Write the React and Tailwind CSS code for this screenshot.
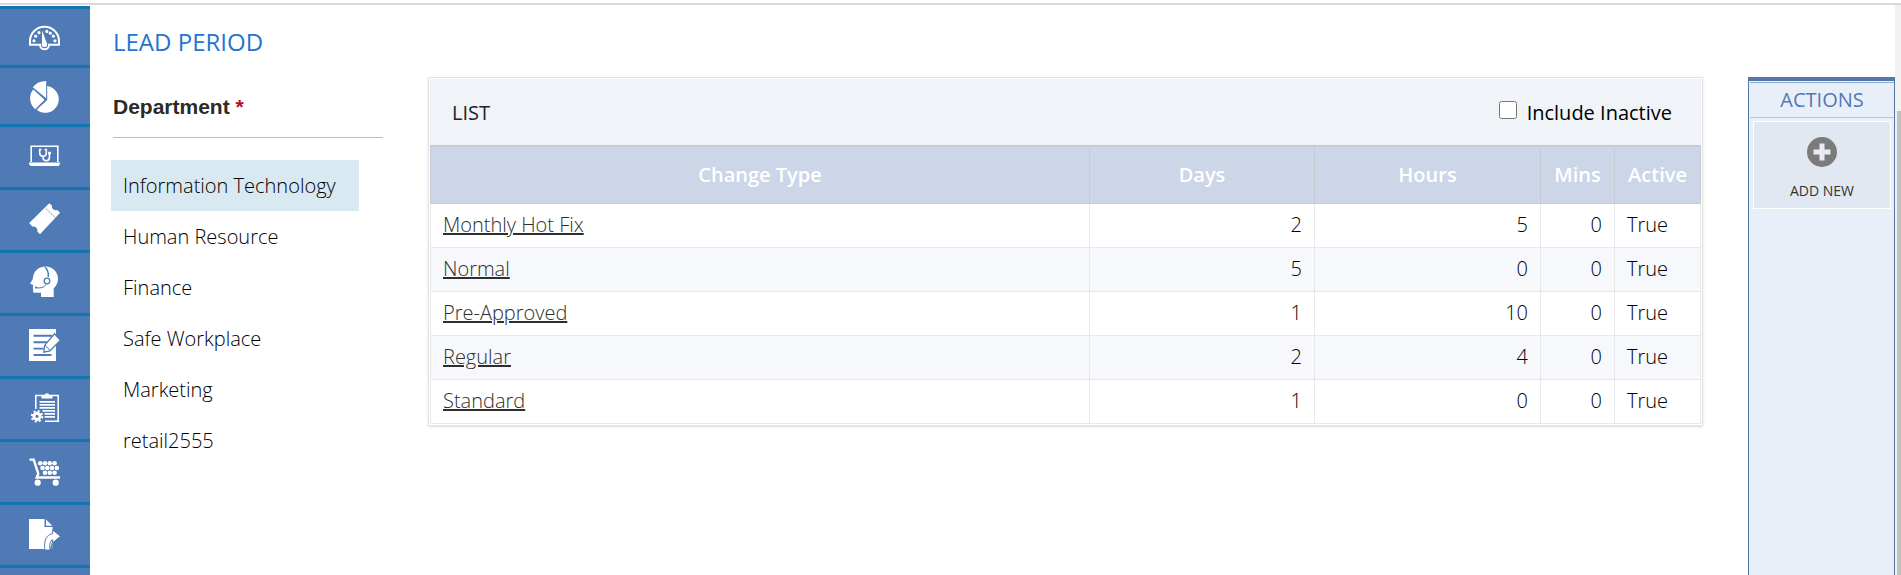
import React, { useState } from 'react';

const GaugeIcon = () => (
    <>
        <path d="M1 23.8V20a14.5 14.2 0 0 1 29 0v3.8h-10a4.5 4.5 0 0 1-9 0Z" fill="none" stroke="currentColor" strokeWidth="2" />
        {[[5, 19.8], [6.7, 15.2], [10, 11.7], [17.8, 10.4], [21.3, 12.2], [24.4, 15.2], [26, 19.8]].map(([x, y]) => (
            <circle key={x} cx={x} cy={y} r="1.6" />
        ))}
        <path d="M13 9.5l5 13a2.5 2.5 0 0 1-5 .6Z" />
        <circle cx="15.4" cy="23.5" r="2.6" />
    </>
);

const PieIcon = () => (
    <>
        <path d="M18.2 6a13.5 13.5 0 1 1-10.5 23.8l10.5-9.8Z" />
        <path d="M4.2 9.6l11.4 10.2-9.4 9.4a14 14 0 0 1-2-19.6Z" />
        <path d="M17.2 1v17.2L3.8 7.2A17 17 0 0 1 17.2 1Z" />
    </>
);

const LaptopIcon = () => (
    <>
        <path d="M2.2 21V5.2h26.6V21" fill="none" stroke="currentColor" strokeWidth="1.6" />
        <path d="M0 21.5h31v1.5l-1.5 2h-28L0 23Z" />
        <path d="M12.5 8.5h-1.8v3.5a3.3 3.3 0 0 0 6.6 0V8.5h-1.8M14 15.3v1.2a3.2 3.2 0 0 0 6.4 0v-4" fill="none" stroke="currentColor" strokeWidth="1.6" />
        <circle cx="20.6" cy="12" r="1.6" />
    </>
);

const TicketIcon = () => (
    <>
        <path d="M20.3-.8l2.6 2.3c-.6 2.6 1.5 4.8 4.2 4.7l1.2-.3 2.8 2.8L11 30.2l-2.7-2.7c.6-3-1.6-5.4-5-5L.2 19Z" />
        <path d="M16.8 4.5l10.4 10" stroke="#4f7ab5" strokeWidth="1" strokeDasharray="1.4 1" />
    </>
);

const HeadsetIcon = () => (
    <>
        <path d="M4 10C5 3 10.5-.6 16.5-.6 24-.6 29 5 29 12c0 3.5-1.5 6.5-4.3 9.5V30H12v-4.2H6c-1.5 0-2-1-2-2.6v-5.4L1 16.8 3.8 12Z" />
        <g fill="none" stroke="#4f7ab5">
            <path d="M16 0c2.6 2.5 3.6 6 3.3 10" strokeWidth="1.5" />
            <circle cx="18" cy="14" r="2.8" strokeWidth="1.3" />
            <path d="M17 17.5c-1.5 3-6 4-10 3.2" strokeWidth="1" />
        </g>
        <circle cx="7" cy="20.6" r="1.1" fill="#4f7ab5" />
    </>
);

const EditIcon = () => (
    <>
        <path d="M0-1h27v32H0Z" />
        <path d="M4.5 5.8h18.5M4.5 12.2h14M4.5 18.6h10M4.5 25h18" stroke="#4f7ab5" strokeWidth="1.9" />
        <path d="M25.5 3.8l6 6.5L20.8 21l-6 1.2.8-6.8Z" stroke="#4f7ab5" strokeWidth="1.3" />
        <path d="M16.2 15.2l4.7 5" stroke="#4f7ab5" strokeWidth="1" />
    </>
);

const ClipboardIcon = () => (
    <>
        <path d="M6.8 16V2.5h22.4v25.8H16" fill="none" stroke="currentColor" strokeWidth="1.6" />
        <path d="M12.5 5.5V2.2h3a2.6 2.6 0 0 1 5 0h3v3.3Z" />
        <path d="M10.5 8.8h15.5M10.5 11.8h15.5M10.5 14.8h15.5M13.5 17.8h12.5M15.5 20.8h10.5M15.5 23.8h10.5" stroke="currentColor" strokeWidth="1.8" />
        <circle cx="8" cy="23.3" r="3.1" fill="none" stroke="currentColor" strokeWidth="3" />
        <circle cx="8" cy="23.3" r="5.2" fill="none" stroke="currentColor" strokeWidth="2.2" strokeDasharray="2 2.08" />
    </>
);

const CartIcon = () => (
    <>
        <path d="M.5 3.6h4.2l4.6 14.2-1.6 3.7h23.3" fill="none" stroke="currentColor" strokeWidth="2.4" />
        {[[11.2, 7.3], [16, 7.3], [20.8, 7.3], [25.6, 7.3], [13.5, 12], [18.3, 12], [23.1, 12], [27.9, 12], [16, 16.7], [20.8, 16.7], [25.6, 16.7]].map(([x, y]) => (
            <circle key={`${x}-${y}`} cx={x} cy={y} r="2.3" />
        ))}
        <circle cx="8.7" cy="26.7" r="3.1" />
        <circle cx="26.7" cy="26.7" r="3.1" />
    </>
);

const ShareIcon = () => (
    <>
        <path d="M0 0h15.5v8h8v22H0Z" />
        <path d="M17 .5l6.3 6.2H17Z" />
        <path d="M23.5 21v9.5H21Z" fill="#4f7ab5" />
        <path d="M15.8 30.5c-1-9 1.5-15 7.8-15.7v-3.8l7.9 6.3-7.9 6.5v-3.3c-2.5 1.5-3.4 5-2.6 10" stroke="#4f7ab5" strokeWidth="1" />
    </>
);

const navItems = [
    { label: 'Dashboard', icon: GaugeIcon, height: 'h-[59px]' },
    { label: 'Reports', icon: PieIcon, height: 'h-[59px]' },
    { label: 'Diagnostics', icon: LaptopIcon, height: 'h-[63px]' },
    { label: 'Tickets', icon: TicketIcon, height: 'h-[63px]' },
    { label: 'Support', icon: HeadsetIcon, height: 'h-[63px]' },
    { label: 'Forms', icon: EditIcon, height: 'h-[63px]' },
    { label: 'Tasks', icon: ClipboardIcon, height: 'h-[63px]' },
    { label: 'Purchases', icon: CartIcon, height: 'h-[63px]' },
    { label: 'Releases', icon: ShareIcon, height: 'h-[63px]' },
];

const departments = ['Information Technology', 'Human Resource', 'Finance', 'Safe Workplace', 'Marketing', 'retail2555'];

const changeTypes = [
    { name: 'Monthly Hot Fix', days: 2, hours: 5, mins: 0, active: 'True' },
    { name: 'Normal', days: 5, hours: 0, mins: 0, active: 'True' },
    { name: 'Pre-Approved', days: 1, hours: 10, mins: 0, active: 'True' },
    { name: 'Regular', days: 2, hours: 4, mins: 0, active: 'True' },
    { name: 'Standard', days: 1, hours: 0, mins: 0, active: 'True' },
];

const Sidebar = () => (
    <nav className="mt-px w-[90px] shrink-0 bg-[#4f7ab5]">
        {navItems.map(({ label, icon: Icon, height }) => (
            <a key={label} href="#" aria-label={label} className={`flex items-center justify-center border-t-3 border-[#1375b0] text-white ${height}`}>
                <svg viewBox="0 0 32 32" fill="currentColor" className="size-8 overflow-visible">
                    <Icon />
                </svg>
            </a>
        ))}
        <div className="border-t-3 border-[#1375b0]" />
    </nav>
);

const DepartmentList = ({ selected, onSelect }) => (
    <section className="w-[272px] shrink-0">
        <h2 className="ml-0.5 border-b border-[#bfbfbf] pt-[18px] pb-[18px] font-['Liberation_Sans',Arial,sans-serif] text-[21px] leading-6 font-bold text-[#2b2b2b]">
            Department <span className="text-[#b01116]">*</span>
        </h2>
        <ul className="mt-[22px] w-[248px]">
            {departments.map((name) => (
                <li key={name}>
                    <button
                        onClick={() => onSelect(name)}
                        className={`h-[51px] w-full px-3 text-left font-light text-black ${selected === name ? 'bg-[#d8e9f1]' : ''}`}
                    >
                        {name}
                    </button>
                </li>
            ))}
        </ul>
    </section>
);

const ChangeTypeTable = () => (
    <table className="w-full table-fixed border-collapse">
        <colgroup>
            <col />
            <col className="w-[225px]" />
            <col className="w-[226px]" />
            <col className="w-[74px]" />
            <col className="w-[86px]" />
        </colgroup>
        <thead>
            <tr className="h-[57px] bg-[#ccd6e8] text-white">
                {['Change Type', 'Days', 'Hours', 'Mins', 'Active'].map((title) => (
                    <th key={title} className="border border-t-2 border-[#c6cad1] font-semibold">{title}</th>
                ))}
            </tr>
        </thead>
        <tbody className="font-light text-black">
            {changeTypes.map((row) => (
                <tr key={row.name} className="h-11 even:bg-[#f6f8fc]">
                    <td className="border border-[#e6e8e9] px-3">
                        <a href="#" className="text-[#2e2e2e] underline">{row.name}</a>
                    </td>
                    <td className="border border-[#e6e8e9] px-3 text-right">{row.days}</td>
                    <td className="border border-[#e6e8e9] px-3 text-right">{row.hours}</td>
                    <td className="border border-[#e6e8e9] px-3 text-right">{row.mins}</td>
                    <td className="border border-[#e6e8e9] px-3">{row.active}</td>
                </tr>
            ))}
        </tbody>
    </table>
);

const ActionsPanel = () => (
    <aside className="mt-[72px] flex w-[147px] shrink-0 flex-col border border-t-4 border-b-0 border-[#5577a8] bg-[#e9eff8] pt-px pl-px">
        <h2 className="border-t border-b border-t-[#8facd6] border-b-[#bcc7d6] text-center text-xl leading-[34px] text-[#5377b5]">ACTIONS</h2>
        <button className="mx-[3px] mt-[3px] flex h-[88px] flex-col items-center border border-white bg-[#e2e8f1] pt-[15px]">
            <svg viewBox="0 0 30 30" className="size-[30px]">
                <circle cx="15" cy="15" r="15" fill="#7b7b7b" />
                <path d="M12.5 6.5h5v6h6v5h-6v6h-5v-6h-6v-5h6Z" fill="#e9edf3" />
            </svg>
            <span className="mt-[14px] text-sm font-medium text-[#333]">ADD NEW</span>
        </button>
    </aside>
);

export default function App() {
    const [department, setDepartment] = useState('Information Technology');
    const [includeInactive, setIncludeInactive] = useState(false);

    return (
        <div className="flex min-h-screen flex-col bg-white pt-[3px] font-['Open_Sans',sans-serif] text-xl leading-7 text-[#22222a]">
            <div className="h-0.5 bg-[#d9d9d9]" />
            <div className="flex flex-1">
                <Sidebar />
                <main className="min-w-0 flex-1 pt-[21px] pr-[45px] pl-[21px]">
                    <h1 className="ml-0.5 text-2xl leading-8 text-[#2475d0]">LEAD PERIOD</h1>
                    <div className="mt-[19px] flex items-start gap-[45px]">
                        <DepartmentList selected={department} onSelect={setDepartment} />
                        <section className="min-w-0 flex-1 border border-[#e1e3e6] p-px shadow-sm">
                            <div className="flex h-[66px] items-center justify-between bg-[#f0f4f9] pt-px pr-[29px] pl-[22px]">
                                <h2>LIST</h2>
                                <label className="flex items-center gap-2.5 font-medium text-black">
                                    <input
                                        type="checkbox"
                                        checked={includeInactive}
                                        onChange={(e) => setIncludeInactive(e.target.checked)}
                                        className="mb-1.5 size-[18px]"
                                    />
                                    Include Inactive
                                </label>
                            </div>
                            <ChangeTypeTable />
                        </section>
                    </div>
                </main>
                <ActionsPanel />
                <div className="flex w-1.5 flex-col items-end bg-[#f1f1f1] pt-[106px]">
                    <div className="w-1 flex-1 bg-[#c1c1c1]" />
                </div>
            </div>
        </div>
    );
}
